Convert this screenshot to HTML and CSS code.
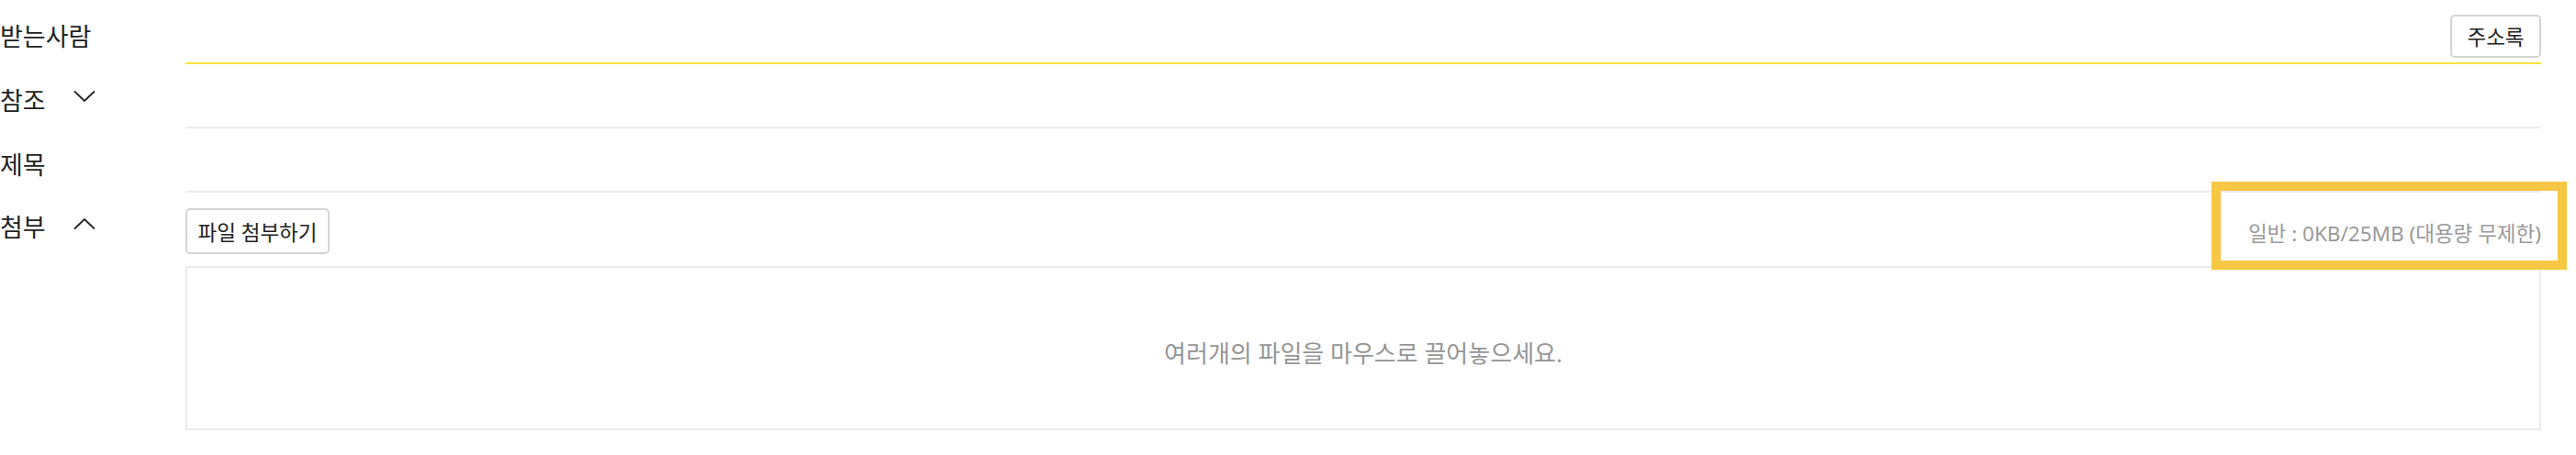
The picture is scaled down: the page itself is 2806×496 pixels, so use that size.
FILE: index.html
```html
<!DOCTYPE html>
<html lang="ko">
<head>
<meta charset="utf-8">
<link rel="stylesheet" href="styles.css">
</head>
<body>
<div class="form">
  <div class="row">
    <div class="label"><span>받는사람</span></div>
    <div class="field field-to">
      <button class="btn btn-book" type="button">주소록</button>
    </div>
  </div>
  <div class="row">
    <div class="label"><span>참조</span>
      <svg class="chev" width="24" height="14" viewBox="0 0 24 14"><polyline points="1,1.5 12,12 23,1.5" fill="none" stroke="#222" stroke-width="1.8"/></svg>
    </div>
    <div class="field"></div>
  </div>
  <div class="row">
    <div class="label"><span>제목</span></div>
    <div class="field"></div>
  </div>
  <div class="row row-attach">
    <div class="label label-attach"><span>첨부</span>
      <svg class="chev" width="24" height="14" viewBox="0 0 24 14"><polyline points="1,12.5 12,2 23,12.5" fill="none" stroke="#222" stroke-width="1.8"/></svg>
    </div>
    <div class="attach">
      <div class="attach-bar">
        <button class="btn btn-file" type="button">파일 첨부하기</button>
        <span class="quota">일반 : 0KB/25MB (대용량 무제한)</span>
      </div>
      <div class="dropzone">여러개의 파일을 마우스로 끌어놓으세요.</div>
    </div>
  </div>
  <div class="highlight"></div>
</div>
</body>
</html>
```
FILE: styles.css
```css
html, body {
  margin: 0;
  padding: 0;
  background: #fff;
}
body {
  font-family: "Noto Sans", "Noto Sans CJK KR", sans-serif;
  color: #222;
}
.form {
  position: relative;
  width: 2768px;
}
.row {
  display: flex;
}
.label {
  width: 202px;
  flex: none;
  display: flex;
  align-items: center;
  height: 70px;
  padding-top: 9px;
  box-sizing: border-box;
  font-size: 27px;
  line-height: 36px;
  white-space: nowrap;
}
.label span {
  min-width: 80px;
}
.chev {
  display: block;
  margin-top: -9px;
}
.field {
  flex: 1;
  height: 68px;
  border-bottom: 2px solid #ececec;
  display: flex;
  justify-content: flex-end;
  align-items: flex-end;
}
.field-to {
  border-bottom-color: #f9e23c;
  padding-bottom: 5px;
  box-sizing: content-box;
  height: 63px;
}
.btn {
  font-family: "Noto Sans", "Noto Sans CJK KR", sans-serif;
  background: #fff;
  border: 2px solid #d4d4d4;
  border-radius: 5px;
  color: #222;
  font-size: 22.5px;
  padding: 0;
  margin: 0;
  white-space: nowrap;
}
.btn-book {
  width: 99px;
  height: 47px;
}
.btn-file {
  width: 157px;
  height: 50px;
}
.label-attach {
  align-items: flex-start;
  padding-top: 20px;
}
.label-attach .chev {
  margin-top: 7px;
}
.attach {
  flex: 1;
  display: flex;
  flex-direction: column;
  padding-top: 17px;
}
.attach-bar {
  display: flex;
  justify-content: space-between;
  align-items: center;
  height: 50px;
}
.quota {
  font-size: 22.5px;
  color: #9a9a9a;
  padding-top: 2px;
}
.dropzone {
  margin-top: 13px;
  height: 179px;
  border: 2px solid #ebebeb;
  box-sizing: border-box;
  display: flex;
  justify-content: center;
  align-items: center;
  padding-top: 9px;
  font-size: 26px;
  color: #959595;
}
.highlight {
  position: absolute;
  left: 2409px;
  top: 198px;
  width: 387px;
  height: 96px;
  box-sizing: border-box;
  border: 10px solid #f6c744;
}
```
